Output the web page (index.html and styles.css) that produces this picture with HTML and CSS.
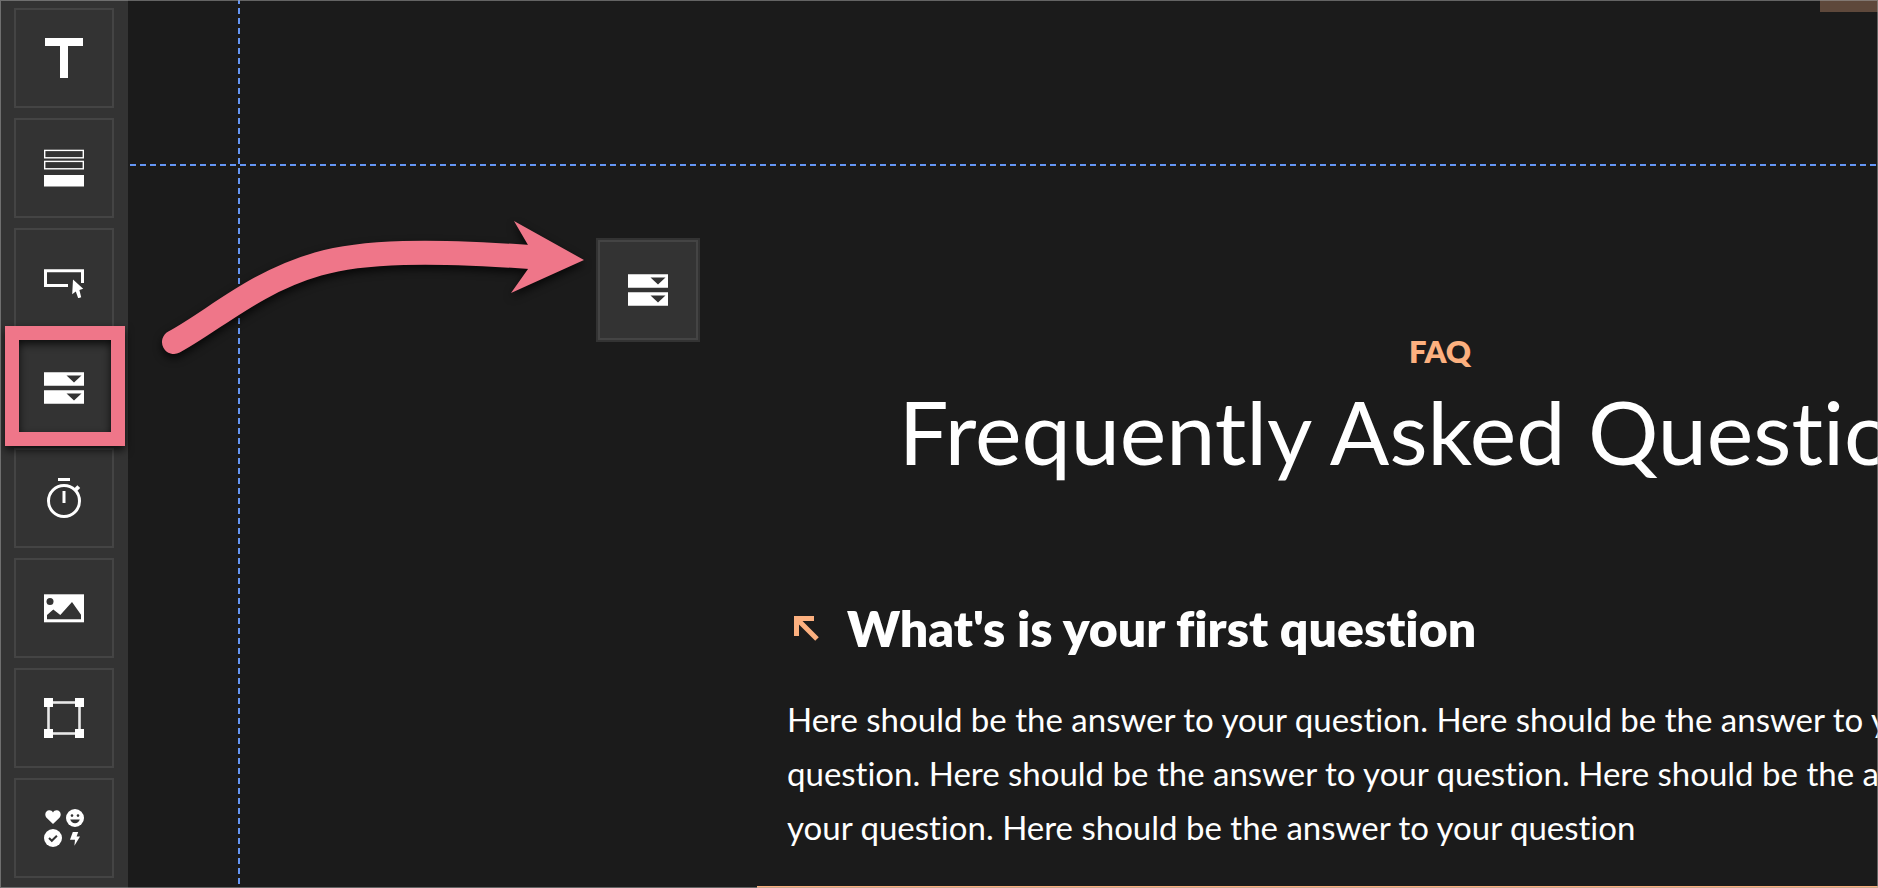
FILE: index.html
```
<!DOCTYPE html>
<html lang="en">
<head>
  <meta charset="UTF-8">
  <title>FAQ - Page editor</title>
  <meta name="viewport" content="width=device-width, initial-scale=1.0">
  <link rel="stylesheet" href="styles.css">
</head>
<body>
  <div class="editor">
    <nav class="toolbar" aria-label="Widgets">
      <button class="tool" type="button" aria-label="Text">
        <svg class="icon" viewBox="0 0 40 40"><rect x="1" width="38" height="8"/><rect x="16" width="8" height="40"/></svg>
      </button>
      <button class="tool" type="button" aria-label="Section">
        <svg class="icon" viewBox="0 0 40 40">
          <g fill="none" stroke="#fff" stroke-width="1.4"><rect x=".7" y="2.4" width="38.6" height="7.4"/><rect x=".7" y="13.4" width="38.6" height="7.4"/></g>
          <rect y="27" width="40" height="11.5"/>
        </svg>
      </button>
      <button class="tool" type="button" aria-label="Button">
        <svg class="icon" viewBox="0 0 40 40">
          <path d="M24 27.5H1.5V12.8H38.5V25" fill="none" stroke="#fff" stroke-width="3"/>
          <path d="M29 21.5L39.2 30.8L35.4 32L37.2 39.2L34.2 40.3L31.8 33.5L28.2 36.2Z"/>
        </svg>
      </button>
      <button class="tool active" type="button" aria-label="Accordion">
        <svg class="icon" viewBox="0 0 40 40"><path fill-rule="evenodd" d="M0 4.3H40V17.8H0ZM22.5 7.4L30 14.4L37.5 7.4ZM0 22.2H40V35.8H0ZM22.5 25.4L30 32.4L37.5 25.4Z"/></svg>
      </button>
      <button class="tool" type="button" aria-label="Timer">
        <svg class="icon" viewBox="0 0 40 40">
          <rect x="14" width="12" height="3"/>
          <rect x="18.5" y="13" width="3" height="12"/>
          <circle cx="20" cy="23" r="15.5" fill="none" stroke="#fff" stroke-width="3"/>
          <path d="M31 12.4L34.8 8.6" stroke="#fff" stroke-width="4"/>
        </svg>
      </button>
      <button class="tool" type="button" aria-label="Image">
        <svg class="icon" viewBox="0 0 40 40">
          <rect y="6.3" width="40" height="28"/>
          <g class="cut"><circle cx="6" cy="13.6" r="3.5"/><path d="M3 31.3V27L9.3 21.5L16.3 27L28 14L37 26.7V31.3Z"/></g>
        </svg>
      </button>
      <button class="tool" type="button" aria-label="Shape">
        <svg class="icon" viewBox="0 0 40 40">
          <rect x="4.5" y="4.5" width="31" height="31" fill="none" stroke="#e8e8e8" stroke-width="2.6"/>
          <rect width="9" height="9"/><rect x="31" width="9" height="9"/><rect y="31" width="9" height="9"/><rect x="31" y="31" width="9" height="9"/>
        </svg>
      </button>
      <button class="tool" type="button" aria-label="Icons">
        <svg class="icon" viewBox="0 0 40 40">
          <path d="M9 16L2.8 10C-.4 6.4 2 2.3 5.3 2.3C7 2.3 8.3 3.2 9 4.4C9.7 3.2 11 2.3 12.7 2.3C16 2.3 18.4 6.4 15.2 10Z"/>
          <circle cx="31" cy="10" r="9"/>
          <circle cx="9" cy="30" r="9"/>
          <path d="M28.8 24H34.2L32.6 28.4H36L30.4 37.8L31 31.8H26Z"/>
          <g class="cut"><circle cx="28" cy="7.6" r="1.3"/><circle cx="34" cy="7.6" r="1.3"/><path d="M26.2 11.6H35.8C35 14 33.3 15.2 31 15.2S27 14 26.2 11.6Z"/></g>
          <path class="cut-line" d="M5 30L7.8 32.8L12.9 27.7"/>
        </svg>
      </button>
    </nav>

    <main class="canvas">
      <div class="guide guide-x"></div>
      <div class="guide guide-y"></div>
      <div class="block-above"></div>

      <section class="faq">
        <p class="eyebrow">FAQ</p>
        <h1 class="title">Frequently Asked Questions</h1>
        <article class="item">
          <h2 class="question">
            <button class="toggle" type="button" aria-expanded="true" aria-controls="answer-1">
              <svg class="toggle-arrow" viewBox="0 0 25 25"><path d="M2.5 20V2.5H20M2.5 2.5L23 23" fill="none" stroke="#fcb07f" stroke-width="5"/></svg>
              What's is your first question
            </button>
          </h2>
          <p class="answer" id="answer-1">Here should be the answer to your question. Here should be the answer to your question. Here should be the answer to your question. Here should be the answer to your question. Here should be the answer to your question</p>
        </article>
      </section>
    </main>

    <!-- drag hint -->
    <svg class="drag-arrow" viewBox="0 0 440 140">
      <path d="M24 132C63 111 105 72 168 54C213 41 280 40 380 47" fill="none" stroke="#ef7689" stroke-width="24" stroke-linecap="round"/>
      <path d="M364 11L434 50L361 83L378 59V35Z" fill="#ef7689"/>
    </svg>
    <div class="dragged">
      <div class="tool">
        <svg class="icon" viewBox="0 0 40 40"><path fill-rule="evenodd" d="M0 4.3H40V17.8H0ZM22.5 7.4L30 14.4L37.5 7.4ZM0 22.2H40V35.8H0ZM22.5 25.4L30 32.4L37.5 25.4Z"/></svg>
      </div>
    </div>
  </div>
</body>
</html>
```
FILE: styles.css
```
* { box-sizing: border-box; }
body { margin: 0; background: #1b1b1b; color: #fff; font-family: Lato, sans-serif; font-variant-ligatures: none; }
h1, h2, p { margin: 0; }
button { font: inherit; color: inherit; cursor: pointer; }

.editor { position: relative; display: flex; height: 100vh; overflow: hidden; }
.editor::after { content: ""; position: absolute; inset: 0; border: 1px solid rgba(160, 160, 160, 0.55); pointer-events: none; z-index: 5; }

/* toolbar */
.toolbar { display: flex; flex-direction: column; gap: 10px; flex: none; padding: 8px 14px; background: #333; }
.tool { position: relative; display: flex; align-items: center; justify-content: center; flex: none; width: 100px; height: 100px; padding: 0; background: #333; border: 2px solid #444; }
.icon { width: 40px; height: 40px; fill: #fff; }
.cut { fill: #333; }
.cut-line { fill: none; stroke: #333; stroke-width: 2; }
.active::after { content: ""; position: absolute; inset: -14px -13px -10px -11px; z-index: 2; border: 14px solid #ef7689; filter: drop-shadow(0 4px 4px rgba(0, 0, 0, 0.75)); }

/* canvas */
.canvas { position: relative; flex: 1; min-width: 0; overflow: hidden; padding: 331px 0 0 629px; }
.guide { position: absolute; }
.guide-x { left: 2px; right: 0; top: 164px; height: 2px; background: repeating-linear-gradient(90deg, #6596f5 0 6px, transparent 6px 10px); }
.guide-y { top: -2px; bottom: 0; left: 110px; width: 2px; background: repeating-linear-gradient(#6596f5 0 6px, transparent 6px 10px); }
.block-above { position: absolute; top: 0; right: 0; width: 58px; height: 12px; background: #5e483b; }

.faq { width: 1366px; }
.eyebrow { color: #fcb07f; font-size: 31px; line-height: 40px; font-weight: 800; text-align: center; }
.title { margin-top: 4px; font-size: 88px; line-height: 112px; font-weight: 400; text-align: center; }
.item { margin-top: 91px; padding: 20px 50px 32px 30px; border-bottom: 2px solid #fcb07f; }
.question { font-size: 50px; line-height: 60px; font-weight: 800; }
.toggle { display: flex; align-items: center; gap: 28px; padding: 0 0 0 7px; background: none; border: 0; font-weight: inherit; }
.toggle-arrow { width: 25px; height: 25px; }
.answer { margin-top: 34px; font-size: 33px; line-height: 54px; }

/* things lying over the canvas */
.drag-arrow { position: absolute; left: 150px; top: 210px; width: 440px; height: 140px; overflow: visible; filter: drop-shadow(0 4px 4px rgba(0, 0, 0, 0.75)); }
.dragged { position: absolute; left: 596px; top: 238px; padding: 2px; background: #333; }
```
